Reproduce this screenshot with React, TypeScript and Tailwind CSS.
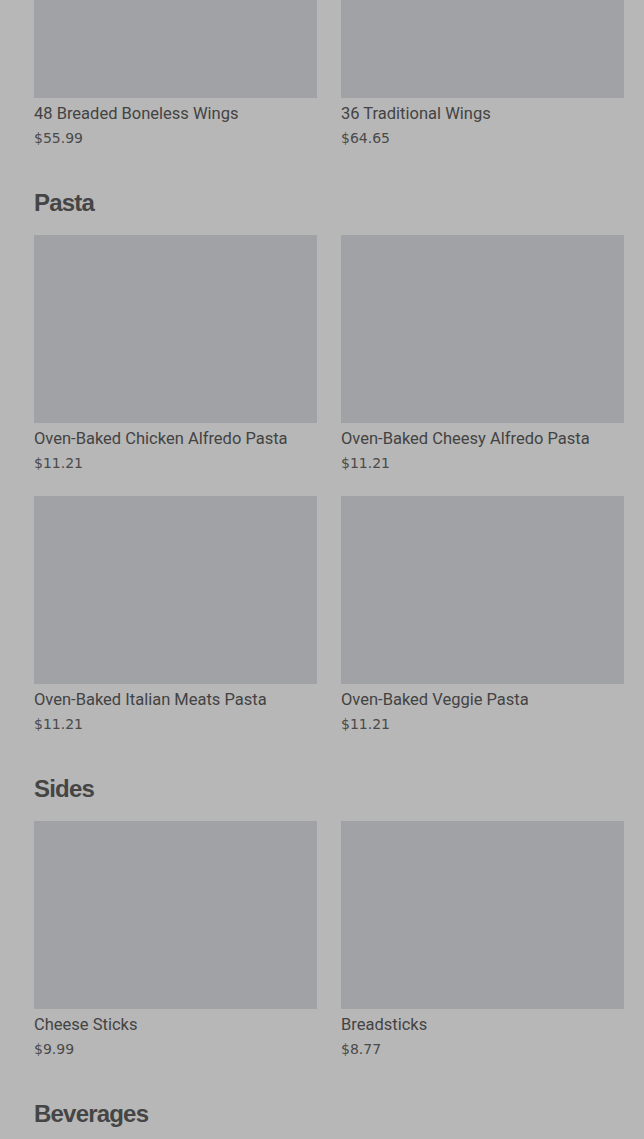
const sections = [
  {
    title: null as string | null,
    items: [
      { name: '48 Breaded Boneless Wings', price: '$55.99' },
      { name: '36 Traditional Wings', price: '$64.65' },
    ],
  },
  {
    title: 'Pasta',
    items: [
      { name: 'Oven-Baked Chicken Alfredo Pasta', price: '$11.21' },
      { name: 'Oven-Baked Cheesy Alfredo Pasta', price: '$11.21' },
      { name: 'Oven-Baked Italian Meats Pasta', price: '$11.21' },
      { name: 'Oven-Baked Veggie Pasta', price: '$11.21' },
    ],
  },
  {
    title: 'Sides',
    items: [
      { name: 'Cheese Sticks', price: '$9.99' },
      { name: 'Breadsticks', price: '$8.77' },
    ],
  },
  { title: 'Beverages', items: [] },
]

interface ItemCardProps {
  name: string
  price: string
}
function ItemCard(props: ItemCardProps) {
  return (
    <div className="flex flex-col">
      <div className="h-[188px] bg-[#a1a2a6]" />
      <div className="mt-[4px] text-[16.5px] leading-6 text-[#434343] font-['Roboto',sans-serif]">
        {props.name}
      </div>
      <div className="text-[14px] leading-6 text-[#4a4a4a] font-['DejaVu_Sans',sans-serif]">
        {props.price}
      </div>
    </div>
  )
}

export default function App() {
  return (
    <div className="min-h-[1139px] bg-[#b7b7b7] pl-[34px] pr-[20px] overflow-hidden">
      <div className="-mt-[90px] flex flex-col">
        {sections.map((s, i) => (
          <div key={i} className="flex flex-col">
            {s.title && (
              <h2 className="mt-[38px] mb-[17px] text-[24px] leading-[30px] font-bold tracking-[-0.8px] text-[#454545] font-['Liberation_Sans',Arial,sans-serif]">
                {s.title}
              </h2>
            )}
            <div className="grid grid-cols-2 gap-x-6 gap-y-[21px]">
              {s.items.map((it) => (
                <ItemCard key={it.name} name={it.name} price={it.price} />
              ))}
            </div>
          </div>
        ))}
      </div>
    </div>
  )
}
